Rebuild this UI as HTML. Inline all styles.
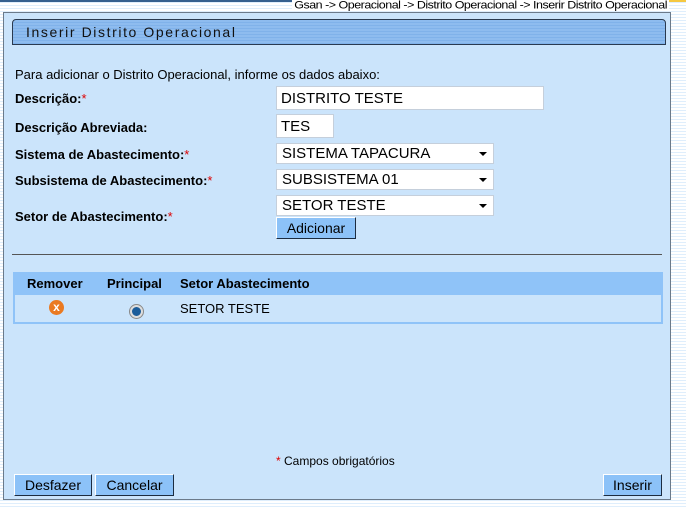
<!DOCTYPE html>
<html><head><meta charset="utf-8"><style>
body{margin:0;width:686px;height:507px;overflow:hidden;background:repeating-linear-gradient(#fff 0 2px,#dfeefc 2px 3px);font-family:"Liberation Sans",sans-serif;font-size:13px;position:relative}
.a{position:absolute}
#top{left:0;top:0;width:686px;height:2px;background:linear-gradient(90deg,#35608f 0,#35608f 66%,#f5c842 66%)}
#crumb{right:17px;top:-1px;font-size:12.5px;letter-spacing:-0.5px;color:#000;background:#fff;padding:0 2px;transform:scaleY(0.85);transform-origin:top}
#panel{left:3px;top:12px;width:668px;height:488px;background:#cbe4fb;border:1px solid #6b7a8a;box-sizing:border-box}
#hdr{left:12px;top:19px;width:654px;height:26px;background:repeating-linear-gradient(#8ebcef 0 2px,#80b2ea 2px 3px);border:1px solid #2a3a50;border-radius:4px 4px 0 0;box-sizing:border-box;font-size:14px;letter-spacing:1.6px;padding:4px 0 0 13px;color:#111}
b{font-weight:bold}
.r{color:#d00}
.in{background:#fff;border:1px solid #c5cfdb;box-sizing:border-box;height:24px;font-size:15px;padding:3px 4px;color:#000}
.sel{background:#fff;border:1px solid #c5cfdb;box-sizing:border-box;height:21px;font-size:15px;padding:1px 5px;width:218px}
.sel:after{content:"";position:absolute;right:6px;top:8px;border:4px solid transparent;border-top:4px solid #000}
.btn{background:#8cc2f8;border:1px solid #1c2c40;border-left-color:#fff;border-top-color:#fff;box-sizing:border-box;height:22px;font-size:14px;text-align:center;line-height:20px}
</style></head><body>
<div class="a" id="top"></div>
<div class="a" id="panel"></div>
<div class="a" id="crumb">Gsan -&gt; Operacional -&gt; Distrito Operacional -&gt; Inserir Distrito Operacional</div>
<div class="a" id="hdr">Inserir Distrito Operacional</div>
<div class="a" style="left:15px;top:67px">Para adicionar o Distrito Operacional, informe os dados abaixo:</div>
<div class="a" style="left:15px;top:91px"><b>Descrição:</b><span class="r">*</span></div>
<div class="a" style="left:15px;top:120px"><b>Descrição Abreviada:</b></div>
<div class="a" style="left:15px;top:147px"><b>Sistema de Abastecimento:</b><span class="r">*</span></div>
<div class="a" style="left:15px;top:173px"><b>Subsistema de Abastecimento:</b><span class="r">*</span></div>
<div class="a" style="left:15px;top:209px"><b>Setor de Abastecimento:</b><span class="r">*</span></div>
<div class="a in" style="left:276px;top:86px;width:268px">DISTRITO TESTE</div>
<div class="a in" style="left:276px;top:114px;width:58px">TES</div>
<div class="a sel" style="left:276px;top:143px">SISTEMA TAPACURA</div>
<div class="a sel" style="left:276px;top:169px">SUBSISTEMA 01</div>
<div class="a sel" style="left:276px;top:195px">SETOR TESTE</div>
<div class="a btn" style="left:276px;top:217px;width:80px">Adicionar</div>
<div class="a" style="left:12px;top:254px;width:650px;height:1px;background:#555"></div>
<div class="a" style="left:13px;top:272px;width:650px;height:52px;background:#cbe4fb;border:2px solid #8fc3f8;box-sizing:border-box"></div>
<div class="a" style="left:13px;top:272px;width:650px;height:23px;background:#8fc3f8"></div>
<div class="a" style="left:27px;top:276px"><b>Remover</b></div>
<div class="a" style="left:107px;top:276px"><b>Principal</b></div>
<div class="a" style="left:180px;top:276px"><b>Setor Abastecimento</b></div>
<div class="a" style="left:49px;top:300px;width:15px;height:15px;border-radius:50%;background:#ea7a22;color:#fff;font-size:12px;font-weight:bold;text-align:center;line-height:15px">x</div>
<div class="a" style="left:130px;top:305px;width:9px;height:9px;border-radius:50%;background:#1b5c9a;border:2px solid #ddd;box-shadow:0 0 0 1px #888"></div>
<div class="a" style="left:180px;top:301px">SETOR TESTE</div>
<div class="a" style="left:276px;top:454px;font-size:12px"><span class="r">*</span> Campos obrigatórios</div>
<div class="a btn" style="left:14px;top:474px;width:78px">Desfazer</div>
<div class="a btn" style="left:95px;top:474px;width:79px">Cancelar</div>
<div class="a btn" style="left:603px;top:474px;width:59px">Inserir</div>
</body></html>
